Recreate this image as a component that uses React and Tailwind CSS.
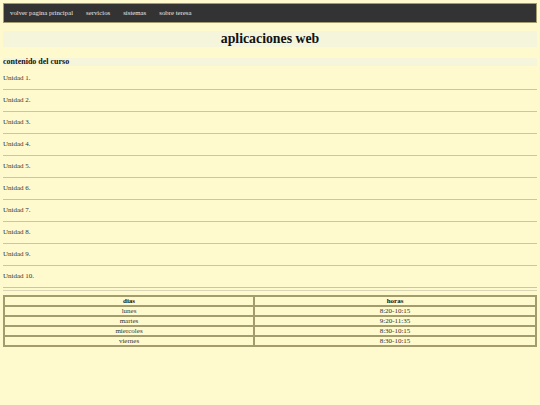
const navLinks = ['volver pagina principal', 'servicios', 'sistemas', 'sobre teresa'];

const unidades = Array.from({ length: 10 }, (_, i) => `Unidad ${i + 1}.`);

const horario = [
  { dia: 'lunes', horas: '8:20-10:15' },
  { dia: 'martes', horas: '9:20-11:35' },
  { dia: 'miercoles', horas: '8:30-10:15' },
  { dia: 'viernes', horas: '8:30-10:15' },
];

const serif = { fontFamily: '"Liberation Serif", "DejaVu Serif", serif' };

export default function App() {
  return (
    <div className="min-h-[405px] bg-[#fffacd] p-[3px] text-[#333]" style={serif}>
      {/* barra de navegacion */}
      <nav className="flex h-[20px] items-center gap-[13px] border border-[#a39c6c] bg-[#333] pl-[6px] text-[6.8px] text-[#e6e6e6]">
        {navLinks.map((link) => (
          <span key={link}>{link}</span>
        ))}
      </nav>

      {/* titulo */}
      <div className="mt-[8px] flex h-[16px] items-center justify-center bg-[#f5f5dc]">
        <h1 className="text-[13.8px] font-bold leading-none text-[#111]" style={serif}>
          aplicaciones web
        </h1>
      </div>

      {/* contenido */}
      <div className="mt-[11px] flex h-[8px] items-center bg-[#f5f5dc]">
        <h2 className="text-[8px] font-bold leading-none text-[#111]" style={serif}>
          contenido del curso
        </h2>
      </div>

      <div className="mt-[2px]">
        {unidades.map((u) => (
          <div key={u}>
            <div className="flex h-[21px] items-center text-[7px]">{u}</div>
            <div className="border-t border-[#c9c6a6]" />
          </div>
        ))}
        <div className="mt-[2px] border-t border-[#d8d5b5]" />
      </div>

      {/* horario */}
      <table className="mt-[4px] w-full border-separate border-spacing-0 border border-[#a39c6c] text-[7px]">
        <thead>
          <tr>
            <th className="h-[10px] w-[47%] border border-[#a39c6c] p-0 leading-none text-[#111]">dias</th>
            <th className="h-[10px] w-[53%] border border-[#a39c6c] p-0 leading-none text-[#111]">horas</th>
          </tr>
        </thead>
        <tbody>
          {horario.map((h) => (
            <tr key={h.dia}>
              <td className="h-[10px] border border-[#a39c6c] p-0 text-center leading-none">{h.dia}</td>
              <td className="h-[10px] border border-[#a39c6c] p-0 text-center leading-none">{h.horas}</td>
            </tr>
          ))}
        </tbody>
      </table>
    </div>
  );
}
